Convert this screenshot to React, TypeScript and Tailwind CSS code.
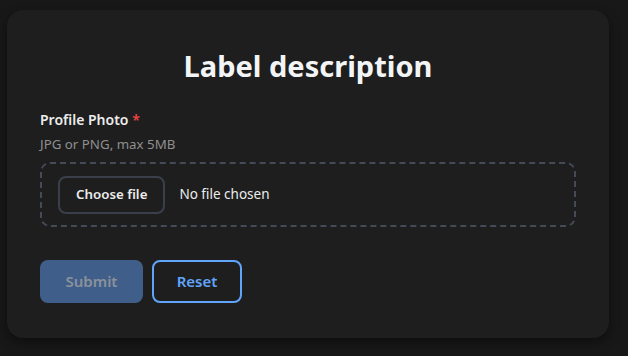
import React from 'react';

const App: React.FC = () => {
    return (
        <div className="min-h-screen bg-[#181818] pt-[10px] pl-[7px] font-['Noto_Sans',sans-serif]">
            <div className="w-[602px] rounded-2xl bg-[#1e1e1e] px-[33px] pt-[38px] pb-[35px] shadow-[0_4px_12px_rgba(0,0,0,0.45)]">
                {/* Title */}
                <h1 className="text-center text-[29px] font-bold leading-[36px] text-[#f3f4f6]">Label description</h1>

                {/* Upload field */}
                <div className="mt-[26px]">
                    <label className="block text-[14px] font-semibold leading-5 text-[#ececec]">
                        Profile Photo <span className="text-[#ef4444]">*</span>
                    </label>
                    <p className="mt-[4px] text-[13.3px] leading-5 text-[#8f8f8f]">JPG or PNG, max 5MB</p>
                    <div className="mt-[8px] flex h-[65px] items-center gap-[14px] rounded-[10px] border-2 border-dashed border-[#454a57] px-[16px]">
                        <button className="h-[38px] rounded-lg border-2 border-[#3a3f4b] bg-[#1e1e1e] px-[16px] text-[13.3px] font-semibold text-[#ececec]">
                            Choose file
                        </button>
                        <span className="text-[13.5px] text-[#ececec]">No file chosen</span>
                    </div>
                </div>

                {/* Actions */}
                <div className="mt-[33px] flex gap-[9px]">
                    <button className="h-[43px] w-[103px] rounded-lg bg-[#3f5f8a] text-[15px] font-semibold text-[#8b919a]">
                        Submit
                    </button>
                    <button className="h-[43px] w-[90px] rounded-lg border-2 border-[#60a5fa] bg-[#1e1e1e] text-[15px] font-semibold text-[#60a5fa]">
                        Reset
                    </button>
                </div>
            </div>
        </div>
    );
};

export default App;
